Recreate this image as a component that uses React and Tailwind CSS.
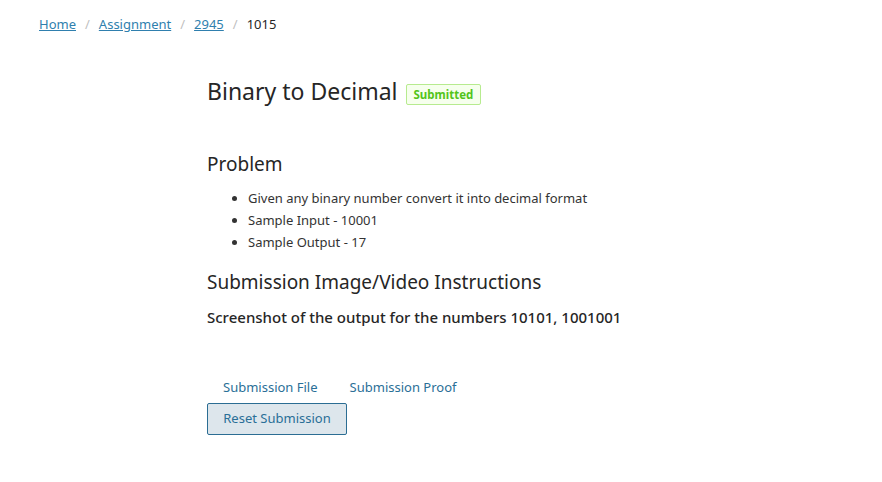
export default function App() {
  return (
    <div className="min-h-screen bg-white text-[#262626]" style={{ fontFamily: '"Noto Sans", "Open Sans", sans-serif' }}>
      {/* Breadcrumb */}
      <nav className="flex items-center gap-[9px] pl-[39px] pt-[14px] text-[13px] leading-[20px]">
        <a href="#" className="text-[#2f7fae] underline">Home</a>
        <span className="text-[#bfbfbf]">/</span>
        <a href="#" className="text-[#2f7fae] underline">Assignment</a>
        <span className="text-[#bfbfbf]">/</span>
        <a href="#" className="text-[#2f7fae] underline">2945</a>
        <span className="text-[#bfbfbf]">/</span>
        <span className="text-[#262626]">1015</span>
      </nav>

      <div className="ml-[207px] w-[480px]">
        {/* Title */}
        <div className="mt-[41px] flex items-center gap-[8px]">
          <h1 className="text-[23px] leading-[32px] text-[#262626]">Binary to Decimal</h1>
          <span className="mt-[6px] rounded-[2px] border border-[#b7eb8f] bg-[#f6ffed] px-[7px] text-[11.5px] font-bold leading-[19px] text-[#52c41a]">
            Submitted
          </span>
        </div>

        {/* Problem */}
        <h2 className="mt-[43px] text-[19px] leading-[28px]">Problem</h2>
        <ul className="mt-[9px] list-disc pl-[41px] text-[13px] leading-[22px] text-[#333]">
          <li>Given any binary number convert it into decimal format</li>
          <li>Sample Input - 10001</li>
          <li>Sample Output - 17</li>
        </ul>

        {/* Instructions */}
        <h2 className="mt-[15px] text-[19px] leading-[28px]">Submission Image/Video Instructions</h2>
        <p className="mt-[10px] text-[15px] font-medium leading-[22px]">
          Screenshot of the output for the numbers 10101, 1001001
        </p>

        {/* Tabs */}
        <div className="mt-[48px] flex text-[13px] leading-[22px] text-[#2a6f97]">
          <button className="px-[16px]">Submission File</button>
          <button className="px-[16px]">Submission Proof</button>
        </div>
        <button className="mt-[5px] h-[32px] w-[140px] rounded-[2px] border border-[#2b6d93] bg-[#dde6ec] text-[13px] text-[#2a6f97]">
          Reset Submission
        </button>
      </div>
    </div>
  );
}
